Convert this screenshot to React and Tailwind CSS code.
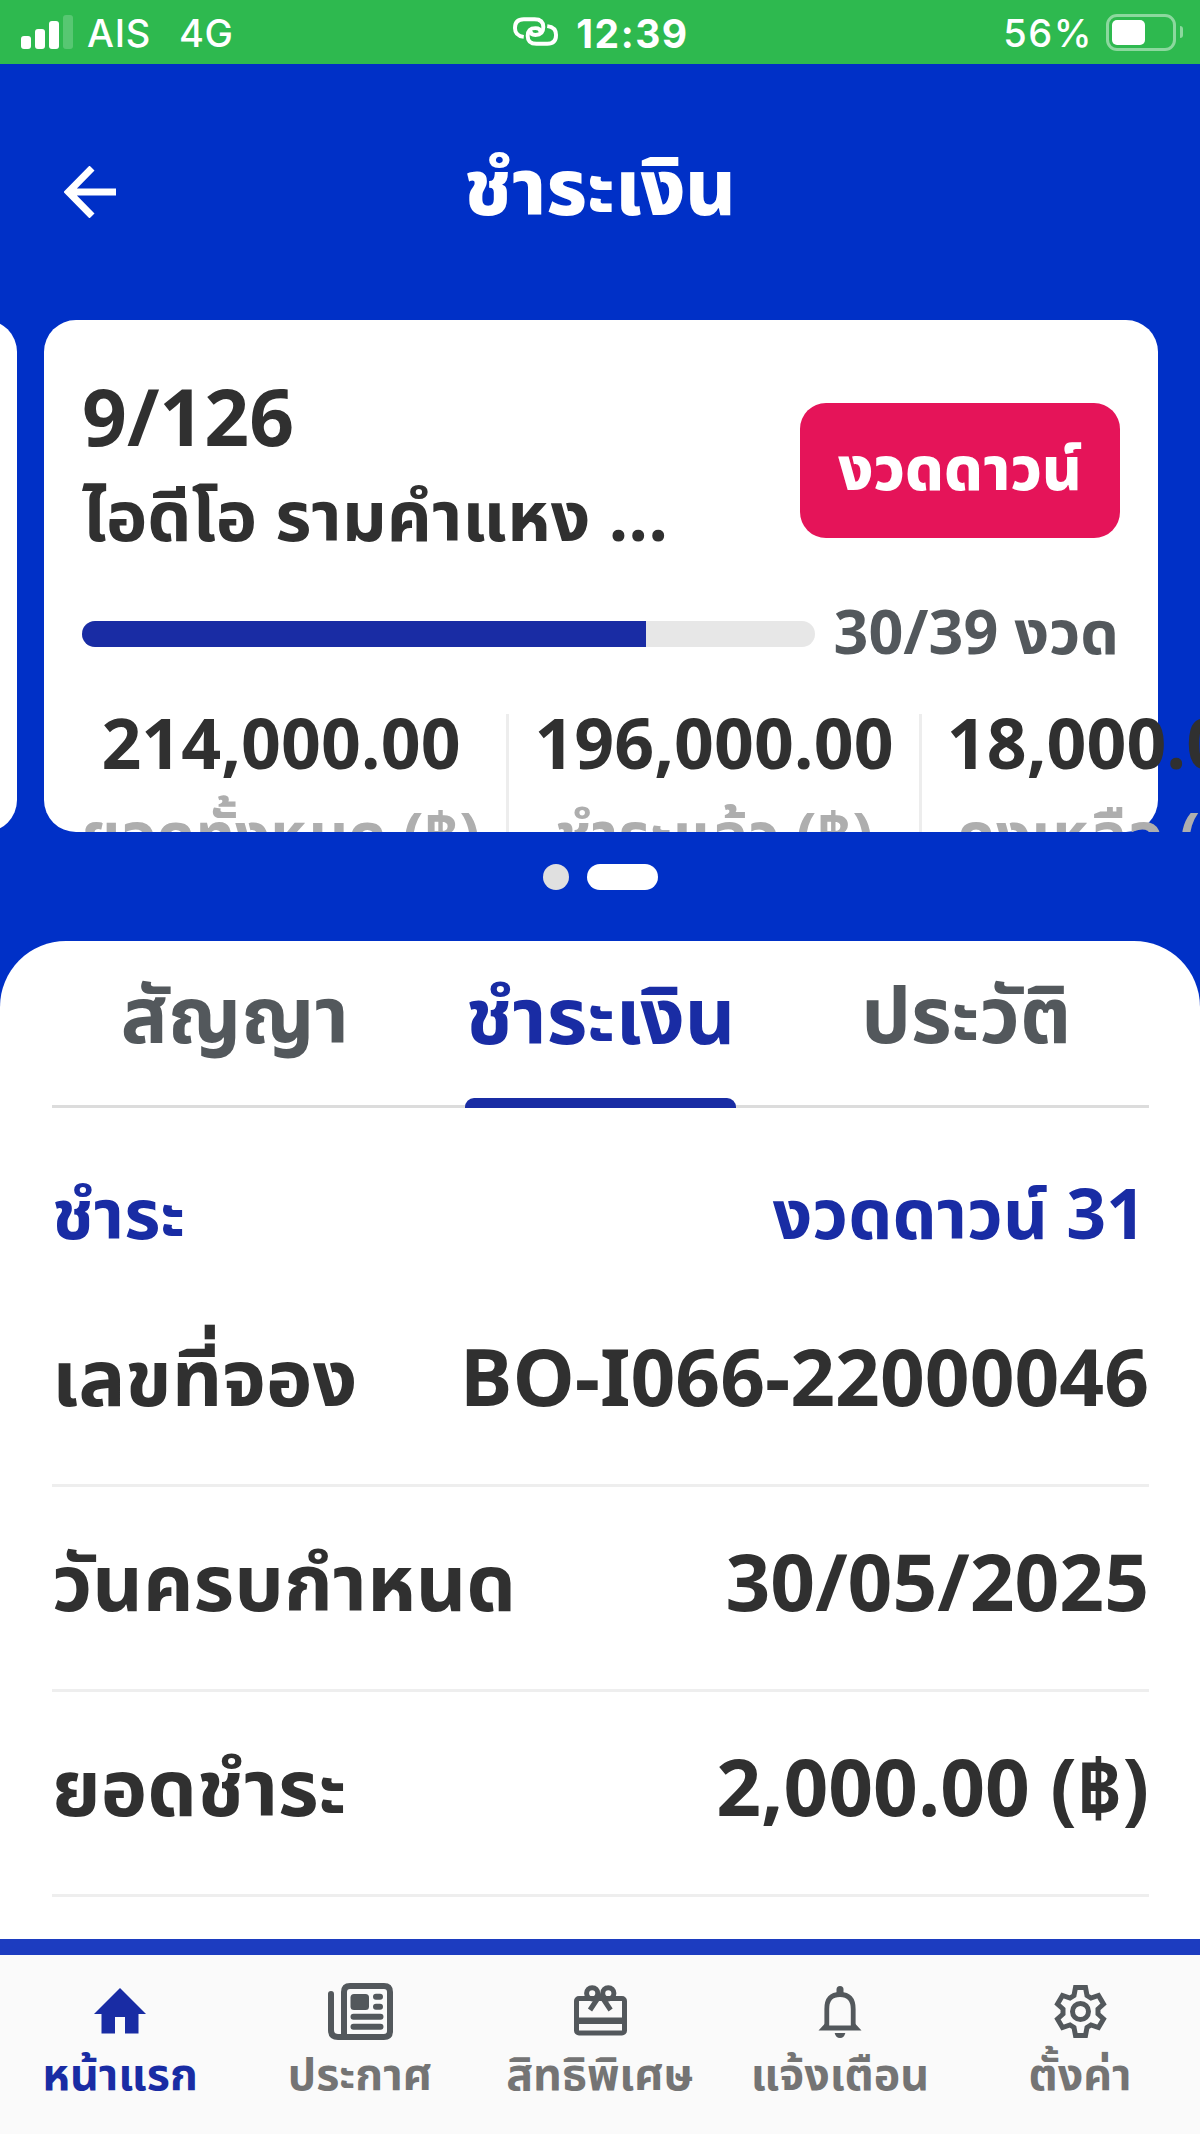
import React from "react";

const amounts = [
  { value: "214,000.00", label: "ยอดทั้งหมด (฿)", cell: "w-[424px] pr-[26px]" },
  { value: "196,000.00", label: "ชำระแล้ว (฿)", cell: "w-[413px] border-l-[3px] border-[#ededed]" },
  { value: "18,000.00", label: "คงเหลือ (฿)", cell: "w-[372px] border-l-[3px] border-[#ededed]" },
];

const details = [
  { label: "เลขที่จอง", value: "BO-I066-22000046" },
  { label: "วันครบกำหนด", value: "30/05/2025" },
  { label: "ยอดชำระ", value: "2,000.00 (฿)" },
];

function HomeIcon() {
  return (
    <svg viewBox="0 0 62 62" className="h-[62px] w-[62px]" fill="currentColor">
      <path d="M31 8 5 34h7.500v19.500H26V37h10v16.500h13.500V34H57z" />
    </svg>
  );
}

function NewsIcon() {
  return (
    <svg viewBox="0 0 66 62" className="h-[62px] w-[66px]" fill="none" stroke="currentColor" strokeLinecap="round">
      <path d="M17 56V12q0-6 6-6h34q6 0 6 6v39q0 6-6 6H11q-7 0-7-7V14" strokeWidth="6" />
      <rect x="23.500" y="14" width="18.500" height="16" rx="3.500" fill="currentColor" stroke="none" />
      <path d="M49 16.700h4M49 26.700h4M26.500 36.700h27M26.500 46.700h27" strokeWidth="6" />
    </svg>
  );
}

function GiftIcon() {
  return (
    <svg viewBox="0 0 56 62" className="h-[62px] w-[56px]" fill="none" stroke="currentColor" strokeWidth="5">
      <rect x="4.500" y="18.500" width="48" height="34.500" rx="2.500" />
      <path d="M4 40.800h49" strokeWidth="6.500" />
      <circle cx="20.200" cy="13.300" r="5.600" />
      <circle cx="36.300" cy="13.300" r="5.600" />
      <path d="M28.300 14.500 18 30M28.300 14.500 38.600 30M24 16h9" />
    </svg>
  );
}

function BellIcon() {
  return (
    <svg viewBox="0 0 44 62" className="h-[62px] w-[44px]" fill="none" stroke="currentColor" strokeWidth="4.800">
      <path d="M8.800 48V29q0-14.500 13.200-14.500T35.200 29v19" />
      <path d="m.500 50.500 6.500-7v2h30v-2l6.500 7z" fill="currentColor" stroke="none" />
      <path d="M22 9.500v4" strokeWidth="7" strokeLinecap="round" />
      <path d="M16.700 53h10.600q-1 5-5.300 5t-5.300-5" fill="currentColor" stroke="none" />
    </svg>
  );
}

function GearIcon() {
  return (
    <svg viewBox="0 0 54 62" className="h-[62px] w-[54px]" fill="none" stroke="currentColor" strokeWidth="5">
      <path d="M22.500 7.500h10l1.500 8 4 2.500 7.500-2.500 5 8.500-5.500 5v5l5.500 5-5 8.500-7.500-2.500-4 2.500-1.500 8h-10l-1.500-8-4-2.500-7.500 2.500-5-8.500 5.500-5v-5l-5.500-5 5-8.500 7.500 2.500 4-2.500z" />
      <circle cx="27.500" cy="31.500" r="8" />
    </svg>
  );
}

const nav = [
  { label: "หน้าแรก", Icon: HomeIcon, active: true },
  { label: "ประกาศ", Icon: NewsIcon },
  { label: "สิทธิพิเศษ", Icon: GiftIcon },
  { label: "แจ้งเตือน", Icon: BellIcon },
  { label: "ตั้งค่า", Icon: GearIcon },
];

function StatusBar() {
  return (
    <header className="grid h-16 shrink-0 grid-cols-3 items-center bg-[#2eb94f] pl-[21px] pr-[17px] font-[Inter,sans-serif] text-[38px] leading-none text-white">
      <div className="flex items-center font-medium">
        <div className="flex h-[34px] items-end gap-[4px]">
          <i className="h-[13px] w-[10px] rounded-[3px] bg-white" />
          <i className="h-[20px] w-[10px] rounded-[3px] bg-white" />
          <i className="h-[28px] w-[10px] rounded-[3px] bg-white" />
          <i className="h-[34px] w-[10px] rounded-[3px] bg-white/20" />
        </div>
        <span className="ml-[14px] mt-[2px] tracking-[0.7px]">AIS</span>
        <span className="ml-[28px] mt-[2px] tracking-[0.5px]">4G</span>
      </div>
      <div className="flex items-center justify-center gap-[18px] pr-[2px] font-bold">
        <svg viewBox="0 0 46 30" className="h-[30px] w-[45px]" fill="none" stroke="currentColor" strokeWidth="4">
          <path d="M11 20Q2 19 2 11q0-9 9-9h11q9 0 9 8 0 8-8 8-5 0-5-4" />
          <path d="M35 9q9 1 9 9 0 9-9 9H24q-9 0-9-8 0-8 8-8 5 0 5 4" />
        </svg>
        <span className="mt-[2px] text-[39px] tracking-[1.500px]">12:39</span>
      </div>
      <div className="flex items-center justify-end font-medium">
        <span className="mt-[2px] tracking-[1.500px]">56%</span>
        <div className="ml-[13px] h-[37px] w-[70px] rounded-[11px] border-[3px] border-white/45 p-[3px]">
          <div className="h-full w-[33px] rounded-[5px] bg-white" />
        </div>
        <i className="ml-[4px] h-[12px] w-[3px] rounded-r-full bg-white/45" />
      </div>
    </header>
  );
}

function ContractCard() {
  return (
    <article className="h-[512px] w-[1114px] shrink-0 rounded-[32px] bg-white px-[38px] pt-[54px]">
      <div className="flex h-[216px] items-start justify-between">
        <div className="font-bold text-[#303030]">
          <p className="h-[97px] text-[78.500px] leading-[96px]">9/126</p>
          <p className="h-[98px] whitespace-nowrap text-[69.800px] leading-[98px]">ไอดีโอ รามคำแหง ...</p>
        </div>
        <span className="mt-[29px] flex h-[135px] w-[320px] items-center justify-center rounded-[26px] bg-[#e51459] pt-px text-[61px] font-extrabold leading-none text-white">
          งวดดาวน์
        </span>
      </div>
      <div className="flex h-[88px] items-center justify-between">
        <div className="h-[26px] w-[733px] overflow-hidden rounded-full bg-[#e7e7e7]">
          <div className="h-full w-[77%] bg-[#192ca4]" />
        </div>
        <span className="whitespace-nowrap pr-px pt-[2px] text-[61px] font-bold leading-[86px] text-[#53585c]">30/39 งวด</span>
      </div>
      <div className="mt-[36px] flex font-bold">
        {amounts.map(({ value, label, cell }) => (
          <div key={label} className={`h-[200px] shrink-0 whitespace-nowrap text-center ${cell}`}>
            <p className="pt-[4px] text-[69.800px] leading-[60px] text-[#303030]">{value}</p>
            <p className="mt-[31px] text-[61.400px] leading-[60px] text-[#aeaeae]">{label}</p>
          </div>
        ))}
      </div>
    </article>
  );
}

export default function App() {
  return (
    <div className="flex h-[2134px] w-[1200px] flex-col overflow-hidden bg-[#0030c7] font-['Noto_Sans_Thai','Noto_Sans',sans-serif]">
      <StatusBar />

      <div className="grid h-[256px] shrink-0 grid-cols-[200px_1fr_200px] items-center">
        <svg viewBox="0 0 52 52" className="ml-[64px] h-[52px] w-[52px]" fill="none" stroke="white" strokeWidth="7">
          <path d="M52 26H5M28 2 4.500 26 28 50" />
        </svg>
        <h1 className="text-center text-[77.500px] font-extrabold leading-[110px] text-white">ชำระเงิน</h1>
      </div>

      <section className="flex h-[512px] shrink-0 overflow-hidden">
        <div className="mr-[27px] w-[17px] shrink-0 overflow-hidden">
          <div className="-ml-[100px] h-full w-[117px] rounded-[32px] bg-white" />
        </div>
        <ContractCard />
      </section>

      <div className="flex h-[109px] shrink-0 justify-center gap-[18px] pt-[32px]">
        <i className="h-[26px] w-[26px] rounded-full bg-[#e0e0e0]" />
        <i className="h-[26px] w-[71px] rounded-full bg-white" />
      </div>

      <main className="flex h-[998px] shrink-0 flex-col rounded-t-[66px] bg-white pl-[52px] pr-[51px]">
        <nav className="grid h-[167px] shrink-0 grid-cols-3 border-b-[3px] border-[#dcdcdc] text-center text-[78.400px] font-bold leading-[157px] text-[#53585c]">
          <span>สัญญา</span>
          <div className="flex flex-col items-center text-[#192ca4]">
            <span className="h-[157px] pt-px">ชำระเงิน</span>
            <i className="h-[10px] w-[271px] shrink-0 rounded-t-[9px] bg-[#192ca4]" />
          </div>
          <span>ประวัติ</span>
        </nav>
        <div className="flex h-[174px] shrink-0 items-center justify-between pr-[3px] pt-[45px] text-[69.800px] font-bold leading-[128px] text-[#192ca4]">
          <span>ชำระ</span>
          <span>งวดดาวน์ 31</span>
        </div>
        {details.map(({ label, value }) => (
          <div key={label} className="flex h-[205px] shrink-0 items-center justify-between whitespace-nowrap border-b-[3px] border-[#eeeeee] pb-[3px] text-[78.400px] font-bold leading-[120px] text-[#303030]">
            <span>{label}</span>
            <span>{value}</span>
          </div>
        ))}
      </main>

      <footer className="grid h-[195px] shrink-0 grid-cols-5 border-t-[16px] border-[#1c3cc0] bg-[#fafafa]">
        {nav.map(({ label, Icon, active }) => (
          <div key={label} className={active ? "flex flex-col items-center pt-[25px] text-[#192ca4]" : "flex flex-col items-center pt-[25px] text-[#53585c]"}>
            <Icon />
            <span className={active ? "text-[44.700px] font-bold leading-[70px]" : "text-[44.700px] font-bold leading-[70px] text-[#747474]"}>{label}</span>
          </div>
        ))}
      </footer>
    </div>
  );
}
